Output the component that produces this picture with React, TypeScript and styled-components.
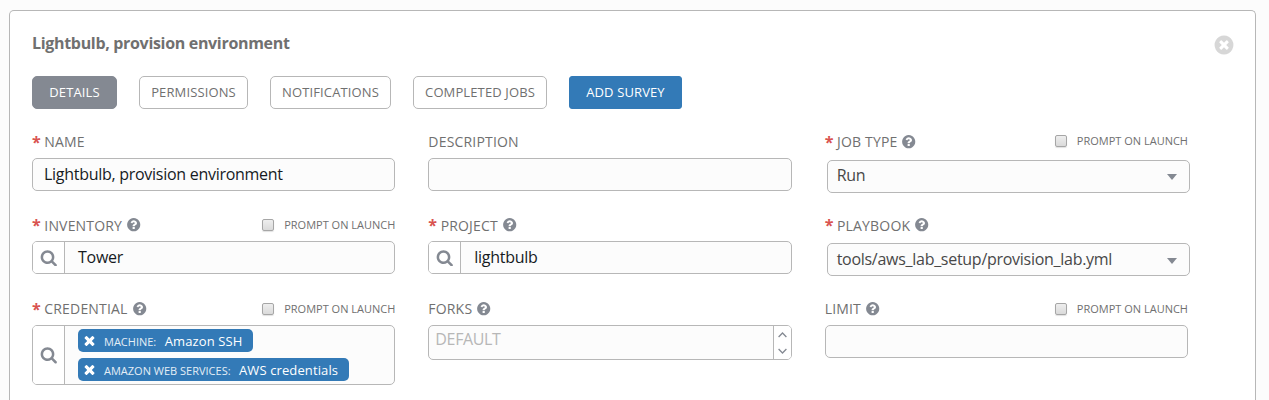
import React from 'react';
import styled, { createGlobalStyle, css } from 'styled-components';

const GlobalStyle = createGlobalStyle`
  *, *::before, *::after { box-sizing: border-box; }
  html, body { margin: 0; }
  body {
    background: #fcfcfc;
    color: #707070;
    font-family: "Open Sans", "Noto Sans", sans-serif;
    font-size: 14px;
  }
`;

const Page = styled.div`
  height: 400px;
  padding: 10px 0 0 9px;
`;

const Panel = styled.main`
  width: 1247px;
  height: 390px;
  padding: 22px 22px 0;
  background: #fff;
  border: 1px solid #b7b7b7;
  border-bottom: 0;
  border-radius: 5px 5px 0 0;
`;

const Header = styled.header`
  display: flex;
  justify-content: space-between;
  align-items: flex-start;
  height: 43px;
`;

const Title = styled.h1`
  margin: 0;
  font-size: 16px;
  line-height: 21px;
  letter-spacing: -0.32px;
  font-weight: 700;
  color: #707070;
`;

const CloseButton = styled.button`
  display: flex;
  margin: 1.2px -1.5px 0 0;
  padding: 0;
  border: 0;
  background: none;
  color: #d7d7d7;
`;

const Tabs = styled.nav`
  display: flex;
  gap: 22px;
  height: 33px;
`;

const Tab = styled.button<{ $width: number; $kind?: 'active' | 'primary' }>`
  width: ${(p) => p.$width}px;
  height: 33px;
  padding: 0 0 1px;
  border: 1px solid #b7b7b7;
  border-radius: 5px;
  background: #fff;
  color: #707070;
  font: 400 13px/20px "Open Sans", sans-serif;
  letter-spacing: 0.12px;
  white-space: nowrap;
  ${(p) => p.$kind === 'active' && css`
    background: #848992;
    border-color: #848992;
    color: #fff;
  `}
  ${(p) => p.$kind === 'primary' && css`
    background: #337ab7;
    border-color: #337ab7;
    border-radius: 3px;
    color: #fff;
  `}
`;

const Form = styled.form`
  display: grid;
  grid-template-columns: repeat(3, 363.33px);
  grid-template-rows: 83px 84px 75px;
  column-gap: 33px;
  margin-top: 23px;
`;

const Field = styled.div`
  display: flex;
  flex-direction: column;
`;

const LabelRow = styled.div<{ $height?: number }>`
  display: flex;
  align-items: flex-start;
  flex: none;
  height: ${(p) => p.$height ?? 26}px;
`;

const Label = styled.label<{ $drop?: number }>`
  padding-top: ${(p) => p.$drop ?? 0}px;
  font-size: 14px;
  line-height: 20px;
  letter-spacing: 0.18px;
  color: #707070;
  white-space: nowrap;
`;

const Required = styled.span`
  width: 12.3px;
  font-size: 16px;
  line-height: 20px;
  font-weight: 700;
  color: #d9534f;
`;

const HelpSlot = styled.span`
  display: flex;
  margin: 2px 0 0 4px;
  color: #848992;
`;

const Prompt = styled.label<{ $raise?: number }>`
  display: flex;
  align-items: center;
  gap: 10px;
  height: ${(p) => 20 - 2 * (p.$raise ?? 0)}px;
  margin-left: auto;
  font-size: 11px;
  line-height: 18px;
  color: #707070;
  white-space: nowrap;
`;

const Checkbox = styled.input.attrs({ type: 'checkbox' })`
  appearance: none;
  width: 12px;
  height: 12px;
  margin: 0;
  border: 1px solid #a6a6a6;
  border-radius: 2px;
  background: linear-gradient(#eee, #dadada);
  box-shadow: 0 1px 1px rgba(0, 0, 0, 0.12);
`;

const boxed = css`
  border: 1px solid #b7b7b7;
  border-radius: 5px;
  background: #fcfcfc;
`;

const valueText = css`
  font: 400 16px/22px "Open Sans", sans-serif;
  letter-spacing: -0.28px;
`;

const TextInput = styled.input`
  ${boxed}
  ${valueText}
  width: 100%;
  height: 33px;
  padding: 0 11px 1px;
  color: #161b1f;
  outline: 0;
`;

const SelectBox = styled.div<{ $drop?: number }>`
  ${boxed}
  ${valueText}
  display: flex;
  align-items: flex-start;
  justify-content: space-between;
  height: 33px;
  margin: 0 -2px 0 2px;
  padding: ${(p) => 3 + (p.$drop ?? 0)}px 11.5px 0 9px;
  color: #484848;
`;

const Caret = styled.span<{ $top: number }>`
  margin-top: ${(p) => p.$top}px;
  border: 5px solid transparent;
  border-top: 6px solid #848992;
  border-bottom: 0;
`;

const Lookup = styled.div<{ $tall?: boolean }>`
  ${boxed}
  display: flex;
  flex: none;
  height: ${(p) => (p.$tall ? 60 : 33)}px;
  overflow: hidden;
`;

const LookupButton = styled.button`
  display: flex;
  align-items: center;
  justify-content: center;
  flex: none;
  width: 32px;
  padding: 0;
  border: 0;
  border-right: 1px solid #b7b7b7;
  background: #fff;
  color: #848992;
`;

const LookupValue = styled.span`
  ${valueText}
  padding: 4px 13px 0;
  color: #161b1f;
`;

const Tags = styled.div`
  display: flex;
  flex-direction: column;
  align-items: flex-start;
  gap: 6px;
  padding: 3px 13px;
`;

const Tag = styled.div<{ $width: number }>`
  display: flex;
  align-items: center;
  width: ${(p) => p.$width}px;
  height: 23px;
  padding-left: 4px;
  border-radius: 5px;
  background: #337ab7;
  color: #fff;
  white-space: nowrap;
`;

const TagKind = styled.span`
  margin: 2px 8.4px 0 7px;
  font-size: 11px;
  line-height: 18px;
  color: #e4eef6;
`;

const TagName = styled.span`
  padding-top: 2px;
  font-size: 13px;
  line-height: 21px;
  letter-spacing: 0.12px;
`;

const Spinner = styled.div`
  ${boxed}
  display: flex;
  height: 35px;
  overflow: hidden;
`;

const SpinnerValue = styled.span`
  ${valueText}
  flex: 1;
  padding: 2px 0 0 6px;
  letter-spacing: -0.35px;
  color: #b7b7b7;
`;

const SpinnerArrows = styled.span`
  display: flex;
  flex-direction: column;
  align-items: center;
  justify-content: space-between;
  width: 18px;
  padding: 6px 0 5px;
  border-left: 1px solid #b7b7b7;
  background: #fff;
`;

const ICONS = {
  search:
    'M1216 832q0-185-131.5-316.5t-316.5-131.5-316.5 131.5-131.5 316.5 131.5 316.5 316.5 131.5 316.5-131.5 131.5-316.5zm512 832q0 52-38 90t-90 38q-54 0-90-38l-343-342q-179 124-399 124-143 0-273.5-55.5t-225-150-150-225-55.5-273.5 55.5-273.5 150-225 225-150 273.5-55.5 273.5 55.5 225 150 150 225 55.5 273.5q0 220-124 399l343 343q37 37 37 90z',
  help:
    'M1024 1376v-192q0-14-9-23t-23-9h-192q-14 0-23 9t-9 23v192q0 14 9 23t23 9h192q14 0 23-9t9-23zm256-672q0-88-55.5-163t-138.5-116-170-41q-243 0-371 213-15 24 8 42l132 100q7 6 19 6 16 0 25-12 53-68 86-92 34-24 86-24 48 0 85.5 26t37.5 59q0 38-20 61t-68 45q-63 28-115.5 86.5t-52.5 125.5v36q0 14 9 23t23 9h192q14 0 23-9t9-23q0-19 21.5-49.5t54.5-49.5q32-18 49-28.5t46-35 44.5-48 28-60.5 12.5-81zm384 192q0 209-103 385.5t-279.5 279.5-385.5 103-385.5-103-279.5-279.5-103-385.5 103-385.5 279.5-279.5 385.5-103 385.5 103 279.5 279.5 103 385.5z',
  close:
    'M1277 1122q0-26-19-45l-181-181 181-181q19-19 19-45 0-27-19-46l-90-90q-19-19-46-19-26 0-45 19l-181 181-181-181q-19-19-45-19-27 0-46 19l-90 90q-19 19-19 46 0 26 19 45l181 181-181 181q-19 19-19 45 0 27 19 46l90 90q19 19 46 19 26 0 45-19l181-181 181 181q19 19 45 19 27 0 46-19l90-90q19-19 19-46zm387-226q0 209-103 385.5t-279.5 279.5-385.5 103-385.5-103-279.5-279.5-103-385.5 103-385.5 279.5-279.5 385.5-103 385.5 103 279.5 279.5 103 385.5z',
  times:
    'M1490 1322q0 40-28 68l-136 136q-28 28-68 28t-68-28l-294-294-294 294q-28 28-68 28t-68-28l-136-136q-28-28-28-68t28-68l294-294-294-294q-28-28-28-68t28-68l136-136q28-28 68-28t68 28l294 294 294-294q28-28 68-28t68 28l136 136q28 28 28 68t-28 68l-294 294 294 294q28 28 28 68z',
};

function Icon({ name, size }: { name: keyof typeof ICONS; size: number }) {
  return (
    <svg width={size} height={size} viewBox="0 0 1792 1792" fill="currentColor" aria-hidden="true">
      <path d={ICONS[name]} />
    </svg>
  );
}

function Chevron({ up }: { up?: boolean }) {
  return (
    <svg width="9" height="6" viewBox="0 0 9 6" fill="none" stroke="#848992" strokeWidth="1.3" aria-hidden="true">
      <path d={up ? 'M0.6 5L4.5 1L8.4 5' : 'M0.6 1L4.5 5L8.4 1'} />
    </svg>
  );
}

interface FormFieldProps {
  label: string;
  required?: boolean;
  help?: boolean;
  prompt?: boolean;
  labelHeight?: number;
  labelDrop?: number;
  promptRaise?: number;
  children: React.ReactNode;
}

function FormField({
  label, required, help, prompt, labelHeight, labelDrop, promptRaise, children,
}: FormFieldProps) {
  return (
    <Field>
      <LabelRow $height={labelHeight}>
        {required && <Required>*</Required>}
        <Label $drop={labelDrop}>{label}</Label>
        {help && <HelpSlot><Icon name="help" size={15.4} /></HelpSlot>}
        {prompt && <Prompt $raise={promptRaise}><Checkbox />PROMPT ON LAUNCH</Prompt>}
      </LabelRow>
      {children}
    </Field>
  );
}

function SearchButton() {
  return (
    <LookupButton type="button" aria-label="Search">
      <Icon name="search" size={17.5} />
    </LookupButton>
  );
}

function CredentialTag({ kind, name, width }: { kind: string; name: string; width: number }) {
  return (
    <Tag $width={width}>
      <Icon name="times" size={15} />
      <TagKind>{kind}:</TagKind>
      <TagName>{name}</TagName>
    </Tag>
  );
}

export default function App() {
  return (
    <Page>
      <GlobalStyle />
      <Panel>
        <Header>
          <Title>Lightbulb, provision environment</Title>
          <CloseButton aria-label="Close"><Icon name="close" size={22} /></CloseButton>
        </Header>
        <Tabs>
          <Tab $width={85} $kind="active">DETAILS</Tab>
          <Tab $width={109}>PERMISSIONS</Tab>
          <Tab $width={121}>NOTIFICATIONS</Tab>
          <Tab $width={134}>COMPLETED JOBS</Tab>
          <Tab $width={113} $kind="primary">ADD SURVEY</Tab>
        </Tabs>
        <Form>
          <FormField label="NAME" required>
            <TextInput defaultValue="Lightbulb, provision environment" />
          </FormField>
          <FormField label="DESCRIPTION">
            <TextInput />
          </FormField>
          <FormField label="JOB TYPE" required help prompt labelHeight={28} promptRaise={1}>
            <SelectBox>Run<Caret $top={10} /></SelectBox>
          </FormField>
          <FormField label="INVENTORY" required help prompt labelDrop={1}>
            <Lookup><SearchButton /><LookupValue>Tower</LookupValue></Lookup>
          </FormField>
          <FormField label="PROJECT" required help labelDrop={1}>
            <Lookup><SearchButton /><LookupValue>lightbulb</LookupValue></Lookup>
          </FormField>
          <FormField label="PLAYBOOK" required help labelHeight={28} labelDrop={1}>
            <SelectBox $drop={1}>tools/aws_lab_setup/provision_lab.yml<Caret $top={10} /></SelectBox>
          </FormField>
          <FormField label="CREDENTIAL" required help prompt>
            <Lookup $tall>
              <SearchButton />
              <Tags>
                <CredentialTag kind="MACHINE" name="Amazon SSH" width={175} />
                <CredentialTag kind="AMAZON WEB SERVICES" name="AWS credentials" width={271} />
              </Tags>
            </Lookup>
          </FormField>
          <FormField label="FORKS" help>
            <Spinner>
              <SpinnerValue>DEFAULT</SpinnerValue>
              <SpinnerArrows><Chevron up /><Chevron /></SpinnerArrows>
            </Spinner>
          </FormField>
          <FormField label="LIMIT" help prompt>
            <TextInput />
          </FormField>
        </Form>
      </Panel>
    </Page>
  );
}
